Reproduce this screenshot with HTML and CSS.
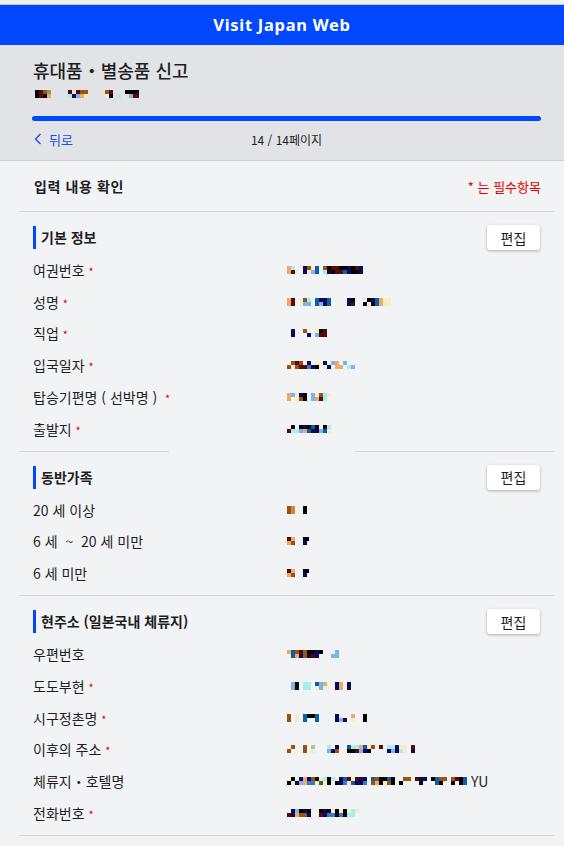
FILE: index.html
```html
<!DOCTYPE html>
<html lang="ko">
<head>
    <meta charset="UTF-8">
    <meta name="viewport" content="width=device-width, initial-scale=1.0">
    <title>휴대품・별송품 신고 - Visit Japan Web</title>
    <link rel="stylesheet" href="styles.css">
</head>
<body>
    <div class="topline"></div>
    <header class="header">Visit Japan Web</header>

    <div class="intro">
        <h1>휴대품・별송품 신고</h1>
        <span class="mask m-sub"></span>
        <div class="progress"><div class="progress-fill"></div></div>
        <div class="nav">
            <a class="back" href="#">
                <svg width="8" height="12" viewBox="0 0 8 12"><path d="M6.5 1 L1.5 6 L6.5 11" fill="none" stroke="currentColor" stroke-width="1.3"/></svg>
                뒤로
            </a>
            <span class="page">14 / 14페이지</span>
            <span></span>
        </div>
    </div>

    <div class="content">
        <div class="summary">
            <span class="summary-title">입력 내용 확인</span>
            <span class="required-note">* 는 필수항목</span>
        </div>

        <!-- 기본 정보 -->
        <section class="section split">
            <div class="section-head">
                <h2>기본 정보</h2>
                <button class="edit">편집</button>
            </div>
            <div class="row"><span class="label">여권번호 <i>*</i></span><span class="mask m-passport"></span></div>
            <div class="row"><span class="label">성명 <i>*</i></span><span class="mask m-name"></span></div>
            <div class="row"><span class="label">직업 <i>*</i></span><span class="mask m-job"></span></div>
            <div class="row"><span class="label">입국일자 <i>*</i></span><span class="mask m-date"></span></div>
            <div class="row"><span class="label">탑승기편명 ( 선박명 ) &nbsp;<i>*</i></span><span class="mask m-flight"></span></div>
            <div class="row"><span class="label">출발지 <i>*</i></span><span class="mask m-from"></span></div>
        </section>

        <!-- 동반가족 -->
        <section class="section">
            <div class="section-head">
                <h2>동반가족</h2>
                <button class="edit">편집</button>
            </div>
            <div class="row"><span class="label">20 세 이상</span><span class="mask m-adult"></span></div>
            <div class="row"><span class="label">6 세 &nbsp;~ &nbsp;20 세 미만</span><span class="mask m-child"></span></div>
            <div class="row"><span class="label">6 세 미만</span><span class="mask m-child"></span></div>
        </section>

        <!-- 현주소 -->
        <section class="section">
            <div class="section-head">
                <h2>현주소 (일본국내 체류지)</h2>
                <button class="edit">편집</button>
            </div>
            <div class="row"><span class="label">우편번호</span><span class="mask m-zip"></span></div>
            <div class="row"><span class="label">도도부현 <i>*</i></span><span class="mask m-pref"></span></div>
            <div class="row"><span class="label">시구정촌명 <i>*</i></span><span class="mask m-city"></span></div>
            <div class="row"><span class="label">이후의 주소 <i>*</i></span><span class="mask m-addr"></span></div>
            <div class="row"><span class="label">체류지・호텔명</span><span class="value"><span class="mask m-hotel"></span>YU</span></div>
            <div class="row"><span class="label">전화번호 <i>*</i></span><span class="mask m-tel"></span></div>
        </section>
    </div>
</body>
</html>
```

FILE: styles.css
```css
body {
    margin: 0;
    background: #f2f3f5;
    color: #1e1e1e;
    font-family: "Noto Sans CJK KR", "Noto Sans", sans-serif;
}
.topline {
    height: 4px;
    background: #f0f0f0;
    border-bottom: 1px solid #c9c9c9;
}
.header {
    height: 40px;
    line-height: 40px;
    background: #0047ff;
    color: #fff;
    text-align: center;
    font-family: "Noto Sans", sans-serif;
    font-weight: 700;
    font-size: 16.5px;
    letter-spacing: 0.7px;
}
.intro {
    background: #e2e3e6;
    padding: 0 23px 11px 32px;
    border-bottom: 1px solid #cfd0d3;
}
h1 {
    margin: 0;
    padding: 13px 0 0 1px;
    font-size: 18px;
    line-height: 24px;
    font-weight: 500;
}
.progress {
    margin-top: 18px;
    height: 5px;
    border-radius: 3px;
    background: #0047ff;
}
.nav {
    display: grid;
    grid-template-columns: 1fr auto 1fr;
    align-items: center;
    margin-top: 8px;
    height: 20px;
    font-size: 12px;
}
.back {
    display: flex;
    align-items: center;
    gap: 7px;
    padding-left: 2px;
    color: #1a4ee6;
    text-decoration: none;
    font-size: 13px;
}
.page {
    color: #222;
}
.content {
    margin: 0 10px 0 19px;
}
.summary {
    display: flex;
    justify-content: space-between;
    align-items: center;
    height: 50px;
    padding: 0 13px 0 15px;
    border-bottom: 1px solid #d5d6d9;
}
.summary-title {
    font-size: 14px;
    font-weight: 700;
    letter-spacing: 0.6px;
}
.required-note {
    color: #e50000;
    font-size: 13px;
}
.section {
    padding: 13px 14px 6px;
    border-bottom: 1px solid #d5d6d9;
}
.section.split {
    border-bottom: none;
    padding-bottom: 7px;
    background: linear-gradient(90deg, #d5d6d9 0 150px, transparent 0 335px, #d5d6d9 0) no-repeat left bottom / 100% 1px;
}
.section-head {
    display: flex;
    justify-content: space-between;
    align-items: center;
    height: 25px;
    margin-bottom: 4px;
}
h2 {
    margin: 0;
    height: 23px;
    line-height: 23px;
    border-left: 3px solid #0047ff;
    padding-left: 5px;
    font-size: 14px;
    font-weight: 700;
}
.edit {
    width: 53px;
    height: 25px;
    background: #fff;
    border: none;
    border-radius: 3px;
    box-shadow: 0 1px 3px rgba(0, 0, 0, 0.3);
    font-family: inherit;
    font-size: 14px;
    color: #1e1e1e;
    padding: 0;
}
.row {
    display: flex;
    align-items: center;
    height: 31.8px;
    font-size: 14px;
}
.label {
    width: 254px;
    flex-shrink: 0;
}
.label i {
    font-style: normal;
    color: #e50000;
    font-size: 11px;
}
.value {
    display: flex;
    align-items: center;
}

/* pixelated (masked) values */
.mask {
    display: inline-block;
    height: 8px;
    background-repeat: no-repeat;
    background-size: 100% 4px;
    background-position: 0 0, 0 4px;
}
.m-sub {
    display: block;
    margin: 8px 0 0 3px;
    width: 112px;
    background-image:
        linear-gradient(90deg, #000 0 4px, #5a0808 0 8px, #9a5410 0 12px, #8c9a60 0 16px, transparent 0 33px, #5a0808 0 37px, transparent 0 41px, #5a0808 0 45px, #9a5410 0 53px, transparent 0 70px, #9a5410 0 74px, #5a0808 0 78px, transparent 0 90px, #000 0 104px, transparent 0),
        linear-gradient(90deg, #000 0 4px, #5a0808 0 8px, #000 0 12px, #eea868 0 16px, transparent 0 33px, #a6eef0 0 37px, #0a0a5a 0 41px, #78b4ee 0 45px, #eea868 0 49px, #f2efc4 0 53px, transparent 0 70px, #f2efc4 0 74px, #000 0 78px, transparent 0 82px, #a6eef0 0 86px, transparent 0 94px, #78b4ee 0 98px, #5a0808 0 104px, transparent 0);
}
.m-passport {
    width: 76px;
    background-image:
        linear-gradient(90deg, #eea868 0 4px, #a6eef0 0 8px, transparent 0 16px, #0a0a5a 0 20px, #9a5410 0 24px, #f2efc4 0 28px, #0a60a8 0 32px, transparent 0 36px, #9a5410 0 40px, #000 0 44px, #5a0808 0 52px, #000 0 60px, #0a0a5a 0 64px, #000 0 68px, #5a0808 0 72px, #0a0a5a 0 76px),
        linear-gradient(90deg, #eea868 0 4px, #5a0808 0 8px, #f2efc4 0 12px, transparent 0 16px, #0a0a5a 0 20px, #f2efc4 0 24px, #78b4ee 0 28px, #0a60a8 0 32px, transparent 0 36px, #a6eef0 0 40px, #0a0a5a 0 44px, #000 0 48px, #5a0808 0 56px, #0a60a8 0 60px, #0a0a5a 0 64px, #000 0 72px, #0a0a5a 0 76px);
}
.m-name {
    width: 108px;
    background-image:
        linear-gradient(90deg, #eea868 0 4px, #5a0808 0 8px, transparent 0 12px, #f2efc4 0 16px, #9a5410 0 20px, #a6eef0 0 24px, transparent 0 28px, #0a60a8 0 32px, #0a0a5a 0 40px, #0a60a8 0 44px, transparent 0 60px, #0a0a5a 0 64px, #000 0 68px, transparent 0 80px, #000 0 84px, #0a0a5a 0 88px, #0a60a8 0 92px, #eea868 0 96px, #f2efc4 0 104px, transparent 0),
        linear-gradient(90deg, #eea868 0 4px, #5a0808 0 8px, transparent 0 12px, #f2efc4 0 16px, #78b4ee 0 24px, transparent 0 28px, #0a60a8 0 32px, #78b4ee 0 36px, #0a0a5a 0 40px, #0a60a8 0 44px, transparent 0 60px, #0a0a5a 0 64px, #5a0808 0 68px, transparent 0 76px, #000 0 80px, transparent 0 84px, #000 0 88px, #0a60a8 0 92px, #eea868 0 96px, #f2efc4 0 104px, transparent 0);
}
.m-job {
    width: 40px;
    background-image:
        linear-gradient(90deg, transparent 0 4px, #0a0a5a 0 8px, transparent 0 16px, #9a5410 0 20px, transparent 0 28px, #f2efc4 0 32px, #000 0 36px, #5a0808 0 40px),
        linear-gradient(90deg, transparent 0 4px, #0a0a5a 0 8px, transparent 0 20px, #0a0a5a 0 24px, transparent 0 28px, #78b4ee 0 32px, #5a0808 0 40px);
}
.m-date {
    width: 76px;
    background-image:
        linear-gradient(90deg, transparent 0 4px, #9a5410 0 8px, #5a0808 0 12px, #9a5410 0 16px, transparent 0 20px, #0a0a5a 0 24px, transparent 0 28px, #f2efc4 0 32px, transparent 0 36px, #0a0a5a 0 40px, transparent 0 44px, #78b4ee 0 48px, #eea868 0 52px, transparent 0 56px, #78b4ee 0 60px, transparent 0 76px),
        linear-gradient(90deg, #9a5410 0 4px, transparent 0 8px, #9a5410 0 12px, #5a0808 0 20px, #3a78c8 0 24px, #0a0a5a 0 28px, #000 0 32px, transparent 0 36px, #f2efc4 0 40px, #0a0a5a 0 44px, transparent 0 48px, #eea868 0 56px, transparent 0 60px, #a6eef0 0 64px, #78b4ee 0 68px, transparent 0);
}
.m-flight {
    width: 48px;
    background-image:
        linear-gradient(90deg, #eea868 0 4px, #78b4ee 0 8px, #f2efc4 0 12px, #0a0a5a 0 16px, #000 0 20px, transparent 0 24px, #78b4ee 0 28px, #f2efc4 0 32px, #9a5410 0 36px, #a6eef0 0 40px, #f2efc4 0 44px, transparent 0),
        linear-gradient(90deg, #eea868 0 4px, transparent 0 8px, #f2efc4 0 12px, #9a5410 0 16px, #000 0 20px, transparent 0 24px, #78b4ee 0 28px, #eea868 0 32px, #5a0808 0 36px, #a6eef0 0 40px, transparent 0);
}
.m-from {
    width: 48px;
    background-image:
        linear-gradient(90deg, transparent 0 4px, #000 0 8px, transparent 0 12px, #000 0 16px, #0a0a5a 0 20px, #000 0 24px, #0a60a8 0 28px, #000 0 32px, transparent 0 36px, #000 0 40px, #a6eef0 0 44px, transparent 0),
        linear-gradient(90deg, #5a0808 0 4px, #a6eef0 0 12px, #78b4ee 0 16px, #eea868 0 20px, #0a60a8 0 24px, #0a0a5a 0 32px, #78b4ee 0 36px, #0a60a8 0 40px, #f2efc4 0 44px, transparent 0);
}
.m-adult {
    width: 24px;
    background-image:
        linear-gradient(90deg, #9a5410 0 4px, #c98a40 0 8px, transparent 0 16px, #000 0 20px, transparent 0),
        linear-gradient(90deg, #9a5410 0 4px, #c98a40 0 8px, transparent 0 16px, #000 0 20px, transparent 0);
}
.m-child {
    width: 24px;
    background-image:
        linear-gradient(90deg, #5a0808 0 4px, #eea868 0 8px, transparent 0 16px, #000 0 22px, transparent 0),
        linear-gradient(90deg, #eea868 0 4px, #9a5410 0 8px, transparent 0 16px, #0a0a5a 0 20px, transparent 0);
}
.m-zip {
    width: 56px;
    background-image:
        linear-gradient(90deg, #eea868 0 4px, #0a60a8 0 8px, #9a5410 0 12px, #5a0808 0 16px, #9a5410 0 20px, #000 0 28px, #0a0a5a 0 32px, #000 0 36px, transparent 0 48px, #78b4ee 0 52px, transparent 0),
        linear-gradient(90deg, transparent 0 4px, #0a60a8 0 8px, #eea868 0 12px, #0a0a5a 0 16px, #9a5410 0 20px, #0a0a5a 0 24px, #5a0808 0 28px, #0a0a5a 0 32px, transparent 0 44px, #78b4ee 0 52px, transparent 0);
}
.m-pref {
    width: 68px;
    background-image:
        linear-gradient(90deg, transparent 0 4px, #78b4ee 0 8px, #000 0 12px, transparent 0 16px, #a6eef0 0 24px, transparent 0 28px, #0a60a8 0 32px, #78b4ee 0 36px, #eea868 0 40px, transparent 0 48px, #0a0a5a 0 52px, #eea868 0 56px, transparent 0 60px, #0a0a5a 0 64px, transparent 0),
        linear-gradient(90deg, transparent 0 4px, #78b4ee 0 8px, #000 0 12px, transparent 0 16px, #a6eef0 0 24px, transparent 0 28px, #f2efc4 0 32px, #78b4ee 0 36px, #f2efc4 0 40px, transparent 0 48px, #0a0a5a 0 52px, #eea868 0 56px, transparent 0 60px, #0a0a5a 0 64px, transparent 0);
}
.m-city {
    width: 84px;
    background-image:
        linear-gradient(90deg, #9a5410 0 4px, transparent 0 8px, #f2efc4 0 12px, transparent 0 16px, #0a60a8 0 20px, #000 0 28px, #0a60a8 0 32px, transparent 0 48px, #0a0a5a 0 52px, #f2efc4 0 56px, transparent 0 64px, #eea868 0 68px, transparent 0 76px, #000 0 80px, transparent 0),
        linear-gradient(90deg, #9a5410 0 4px, transparent 0 8px, #f2efc4 0 12px, transparent 0 16px, #0a60a8 0 20px, transparent 0 28px, #0a60a8 0 32px, transparent 0 48px, #0a0a5a 0 52px, #78b4ee 0 56px, #0a0a5a 0 60px, transparent 0 64px, #f2efc4 0 68px, transparent 0 76px, #000 0 80px, transparent 0);
}
.m-addr {
    width: 140px;
    background-image:
        linear-gradient(90deg, transparent 0 4px, #9a5410 0 8px, transparent 0 16px, #9a5410 0 20px, transparent 0 24px, #90d0a0 0 28px, transparent 0 40px, #a6eef0 0 44px, transparent 0 48px, #0a0a5a 0 52px, transparent 0 60px, #0a60a8 0 64px, #a6eef0 0 72px, #eea868 0 76px, #0a60a8 0 80px, #f2efc4 0 84px, #9a5410 0 88px, transparent 0 92px, #5a0808 0 96px, transparent 0 100px, #a6eef0 0 108px, #0a0a5a 0 112px, #f2efc4 0 120px, transparent 0 124px, #5a0808 0 128px, transparent 0),
        linear-gradient(90deg, #9a5410 0 4px, transparent 0 16px, #9a5410 0 20px, transparent 0 24px, #f2efc4 0 28px, transparent 0 40px, #78b4ee 0 44px, #0a0a5a 0 48px, #9a5410 0 52px, transparent 0 60px, #000 0 68px, #5a0808 0 72px, #78b4ee 0 76px, #0a0a5a 0 80px, #000 0 84px, transparent 0 100px, #0a0a5a 0 104px, #78b4ee 0 108px, #0a0a5a 0 112px, #a6eef0 0 116px, #f2efc4 0 120px, transparent 0 124px, #0a0a5a 0 128px, transparent 0);
}
.m-hotel {
    width: 184px;
    background-image:
        linear-gradient(90deg, transparent 0 4px, #000 0 8px, transparent 0 12px, #0a0a5a 0 16px, #eea868 0 20px, #0a0a5a 0 24px, #9a5410 0 28px, #000 0 32px, #f2efc4 0 36px, #a6eef0 0 40px, #000 0 44px, #a6eef0 0 48px, transparent 0 52px, #0a0a5a 0 56px, #0a60a8 0 60px, #5a0808 0 64px, #f2efc4 0 68px, #5a0808 0 72px, #0a0a5a 0 80px, transparent 0 84px, #0a60a8 0 88px, #9a5410 0 92px, #000 0 100px, #0a60a8 0 104px, #000 0 108px, transparent 0 116px, #9a5410 0 124px, transparent 0 128px, #5a0808 0 132px, #0a0a5a 0 140px, transparent 0 144px, #000 0 148px, #0a60a8 0 152px, #9a5410 0 160px, transparent 0 164px, #9a5410 0 168px, #5a0808 0 172px, #000 0 176px, #0a60a8 0 180px, transparent 0),
        linear-gradient(90deg, #000 0 4px, #f2efc4 0 8px, #0a0a5a 0 12px, #78b4ee 0 16px, #eea868 0 20px, #3a78c8 0 28px, #f2efc4 0 32px, #5a5a20 0 36px, #f2efc4 0 40px, #000 0 44px, transparent 0 48px, #000 0 52px, #0a0a5a 0 56px, #3a78c8 0 60px, #f2efc4 0 64px, #0a60a8 0 68px, #0a0a5a 0 76px, #3a78c8 0 80px, transparent 0 84px, #9a5410 0 88px, #eea868 0 92px, #000 0 96px, #f2efc4 0 100px, #9a5410 0 104px, #000 0 108px, transparent 0 112px, #000 0 116px, transparent 0 132px, #000 0 136px, transparent 0 148px, #0a60a8 0 152px, #000 0 156px, transparent 0 164px, #000 0 168px, transparent 0 172px, #000 0 176px, #0a60a8 0 180px, transparent 0);
}
.m-tel {
    width: 84px;
    background-image:
        linear-gradient(90deg, transparent 0 4px, #0a0a5a 0 8px, #78b4ee 0 12px, #000 0 16px, #0a0a5a 0 20px, #000 0 24px, transparent 0 32px, #000 0 36px, #0a0a5a 0 40px, #000 0 44px, #f2efc4 0 48px, #000 0 52px, #f2efc4 0 56px, #000 0 60px, #f2efc4 0 64px, #a6eef0 0 68px, #f2efc4 0 72px, transparent 0),
        linear-gradient(90deg, #5a0808 0 4px, #0a0a5a 0 8px, #eea868 0 12px, #9a5410 0 20px, #0a0a5a 0 24px, transparent 0 32px, #5a0808 0 36px, #0a0a5a 0 40px, #3a78c8 0 48px, #000 0 52px, #3a78c8 0 56px, #000 0 60px, #a6eef0 0 68px, transparent 0);
}
```
